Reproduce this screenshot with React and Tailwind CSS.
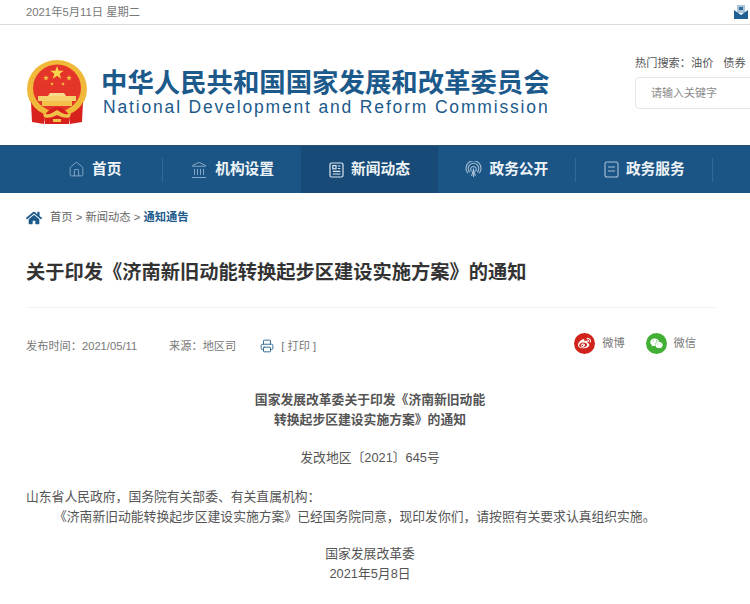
import React from "react";
import { House, Landmark, Printer, Clock } from "lucide-react";
import { FaHome, FaWeibo, FaWeixin } from "react-icons/fa";

const FONT = { fontFamily: '"Liberation Sans", "Noto Sans CJK SC", sans-serif' };

const Star = ({ x, y, r, fill }) => {
  const pts = [];
  for (let i = 0; i < 10; i++) {
    const rad = i % 2 === 0 ? r : r * 0.4;
    const a = (Math.PI / 5) * i - Math.PI / 2;
    pts.push(`${x + rad * Math.cos(a)},${y + rad * Math.sin(a)}`);
  }
  return <polygon points={pts.join(" ")} fill={fill} />;
};

const Emblem = () => (
  <svg width="62" height="65" viewBox="0 0 62 65" className="shrink-0">
    <ellipse cx="31" cy="29" rx="30" ry="29" fill="#f0b93a" />
    <ellipse cx="31" cy="28" rx="24" ry="23.5" fill="#e5352a" />
    <Star x={31} y={13} r={7} fill="#f8d64e" />
    <Star x={20} y={18} r={3} fill="#f5c843" />
    <Star x={43} y={18} r={3} fill="#f5c843" />
    <Star x={26} y={24} r={2} fill="#f5c843" />
    <Star x={37} y={24} r={2} fill="#f5c843" />
    <path d="M24 33h14l2 3H22z" fill="#f8dc8c" />
    <rect x="12" y="36" width="38" height="5" fill="#f6d06a" />
    <rect x="16" y="41" width="30" height="5" fill="#f3c04a" />
    <path d="M5 42c3 6 8 10 14 12l-1 10-12-2z" fill="#d8201c" />
    <path d="M57 42c-3 6-8 10-14 12l1 10 12-2z" fill="#d8201c" />
    <path d="M18 56c4-6 9-9 13-9s9 3 13 9l-1 8H19z" fill="#d8201c" />
    <path d="M17 53c5 3 9 0 14-3 5 3 9 6 14 3l-1 4c-4 2-9 0-13-2-4 2-9 4-13 2z" fill="#f2c14a" />
    <rect x="27" y="59" width="8" height="3" fill="#f2c14a" />
  </svg>
);

const MailBadge = () => (
  <svg width="14" height="16" viewBox="0 0 14 16" className="shrink-0">
    <rect x="3" y="1" width="8" height="8" fill="#a9c3d8" />
    <rect x="5" y="3" width="4" height="3" fill="#2f6c9c" />
    <path d="M0 6l7 5 7-5v9H0z" fill="#1f5f92" />
  </svg>
);

const NewsIcon = () => (
  <svg width="15" height="16" viewBox="0 0 15 16" fill="none" stroke="#dbe6ef" strokeWidth="1.2">
    <rect x="1" y="1" width="13" height="14" rx="1.5" />
    <rect x="3.8" y="3.6" width="3.2" height="3.2" />
    <path d="M8.8 4h2.6M8.8 6.5h2.6M3.8 9.4h7.6M3.8 12h7.6" />
  </svg>
);

const SignalIcon = () => (
  <svg width="17" height="17" viewBox="0 0 18 18" fill="none" stroke="#a9c2d8" strokeWidth="1.1">
    <path d="M3 13a8 8 0 1 1 12 0" />
    <path d="M5 12a5.6 5.6 0 1 1 8 0" />
    <path d="M7 11a3 3 0 1 1 4 0" />
    <path d="M9 9v8M7 16l2-7 2 7" />
  </svg>
);

const DocIcon = () => (
  <svg width="15" height="17" viewBox="0 0 15 17" fill="none" stroke="#a9c2d8" strokeWidth="1.1">
    <rect x="1" y="1" width="13" height="15" rx="2" />
    <path d="M4 6h7M4 10h7" />
  </svg>
);

const navItems = [
  { label: "首页", icon: <House size={17} strokeWidth={1} color="#a9c2d8" /> },
  { label: "机构设置", icon: <Landmark size={18} strokeWidth={1} color="#a9c2d8" /> },
  { label: "新闻动态", icon: <NewsIcon />, active: true },
  { label: "政务公开", icon: <SignalIcon /> },
  { label: "政务服务", icon: <DocIcon /> },
  { label: "", icon: <Clock size={18} strokeWidth={1} color="#a9c2d8" /> },
];

export default function App() {
  return (
    <div className="w-[750px] h-[604px] overflow-hidden bg-white" style={FONT}>
      {/* top bar */}
      <div className="h-[25px] border-b border-[#dcdcdc] flex items-center justify-between pl-[26px] pr-[2px] text-[11.3px] text-[#777]">
        <span>2021年5月11日 星期二</span>
        <MailBadge />
      </div>

      {/* logo row */}
      <div className="h-[120px] flex pl-[26px]">
        <div className="mt-[35px]">
          <Emblem />
        </div>
        <div className="ml-[13px] mt-[45px] w-[473px] shrink-0">
          <div className="text-[26.4px] leading-[27px] font-bold text-[#1d5a8c] whitespace-nowrap">
            中华人民共和国国家发展和改革委员会
          </div>
          <div className="text-[17.5px] leading-[20px] text-[#1d5a8c] tracking-[1.83px] whitespace-nowrap ml-[2px]">
            National Development and Reform Commission
          </div>
        </div>
        <div className="ml-[61px] mt-[30px] shrink-0">
          <div className="text-[11.2px] leading-[16px] text-[#555] whitespace-nowrap">
            热门搜索：<span className="mr-[10px]">油价</span>债券
          </div>
          <div className="mt-[6px] w-[160px] h-[32px] border border-[#e6e6e6] rounded-[4px] flex items-center pl-[15px] text-[11px] text-[#8a8a8a]">
            请输入关键字
          </div>
        </div>
      </div>

      {/* nav */}
      <div className="h-[48px] bg-[#1b5586] flex pl-[26px] border-t border-[#2b4f6e]">
        {navItems.map((item, i) => (
          <div
            key={i}
            className={`w-[137.4px] shrink-0 flex items-center justify-center gap-[7px] relative ${
              item.active ? "bg-[#174a76]" : ""
            }`}
          >
            {item.icon}
            {item.label && (
              <span className="text-[14.7px] font-bold text-[#eef3f7] whitespace-nowrap">{item.label}</span>
            )}
            {!item.active && i !== 1 && i !== 5 && (
              <span className="absolute right-0 top-[12px] h-[24px] w-px bg-[#33689a]" />
            )}
          </div>
        ))}
      </div>

      {/* breadcrumb */}
      <div className="pl-[26px] mt-[16px] flex items-center h-[17px] text-[11.3px] text-[#666]">
        <FaHome size={16} color="#1d5a8c" />
        <span className="ml-[8px]">首页 &gt; 新闻动态 &gt; </span>
        <span className="ml-[3px] text-[#1d5a8c] font-bold">通知通告</span>
      </div>

      {/* title */}
      <div className="ml-[26px] w-[690px] mt-[33px] pb-[20px] border-b border-[#f3f3f3]">
        <h1 className="text-[19.25px] leading-[28px] font-bold text-[#333] whitespace-nowrap">
          关于印发《济南新旧动能转换起步区建设实施方案》的通知
        </h1>
      </div>

      {/* meta row */}
      <div className="ml-[26px] w-[670px] mt-[22px] h-[32px] flex items-center text-[11.2px] text-[#777]">
        <span>发布时间：2021/05/11</span>
        <span className="ml-[32px]">来源：地区司</span>
        <Printer size={14} strokeWidth={1.6} color="#2a6590" className="ml-[24px]" />
        <span className="ml-[7px]">[ 打印 ]</span>
        <div className="ml-auto flex items-center -translate-y-[3px]">
          <span className="w-[21px] h-[21px] rounded-full bg-[#d0231c] flex items-center justify-center">
            <FaWeibo size={13} color="#fff" />
          </span>
          <span className="ml-[7px]">微博</span>
          <span className="ml-[21px] w-[21px] h-[21px] rounded-full bg-[#41b035] flex items-center justify-center">
            <FaWeixin size={13} color="#fff" />
          </span>
          <span className="ml-[7px]">微信</span>
        </div>
      </div>

      {/* article */}
      <div className="ml-[26px] w-[688px] mt-[28px] text-[12.8px] leading-[20px] text-[#555]">
        <div className="text-center font-bold">
          <p>国家发展改革委关于印发《济南新旧动能</p>
          <p>转换起步区建设实施方案》的通知</p>
        </div>
        <p className="text-center mt-[18px]">发改地区〔2021〕645号</p>
        <p className="mt-[19px]">山东省人民政府，国务院有关部委、有关直属机构：</p>
        <p className="indent-[28px] whitespace-nowrap">
          《济南新旧动能转换起步区建设实施方案》已经国务院同意，现印发你们，请按照有关要求认真组织实施。
        </p>
        <p className="text-center mt-[17px]">国家发展改革委</p>
        <p className="text-center">2021年5月8日</p>
      </div>
    </div>
  );
}
